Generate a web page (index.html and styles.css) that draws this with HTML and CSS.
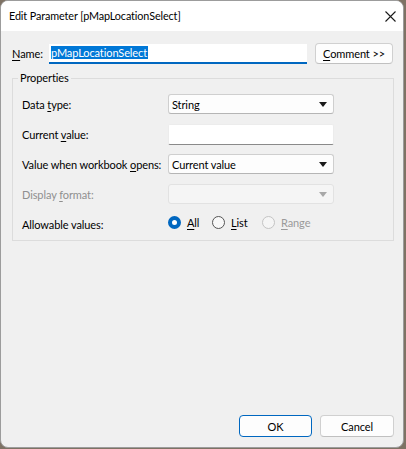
FILE: index.html
```html
<!DOCTYPE html>
<html>
<head>
<meta charset="utf-8">
<link rel="stylesheet" href="styles.css">
</head>
<body>
<div class="window">
  <div class="titlebar">
    <span class="title">Edit Parameter [pMapLocationSelect]</span>
    <svg class="close" width="11" height="11" viewBox="0 0 11 11"><path d="M0.5 0.5L10.5 10.5M10.5 0.5L0.5 10.5" stroke="#1a1a1a" stroke-width="1.1" fill="none"/></svg>
  </div>
  <div class="content">
    <div class="name-row">
      <span class="name-label"><u>N</u>ame:</span>
      <div class="name-input"><span class="sel">pMapLocationSelect</span></div>
      <button class="btn comment"><u>C</u>omment &gt;&gt;</button>
    </div>
    <fieldset class="group">
      <legend>Properties</legend>
      <div class="rows">
        <span class="lbl">Data <u>t</u>ype:</span>
        <div class="combo"><span>String</span><svg class="arrow" width="8" height="5" viewBox="0 0 8 5"><path d="M0 0H8L4 5Z" fill="#1a1a1a"/></svg></div>

        <span class="lbl">Current <u>v</u>alue:</span>
        <div class="textbox"></div>

        <span class="lbl">Value when workbook <u>o</u>pens:</span>
        <div class="combo"><span>Current value</span><svg class="arrow" width="8" height="5" viewBox="0 0 8 5"><path d="M0 0H8L4 5Z" fill="#1a1a1a"/></svg></div>

        <span class="lbl disabled">Display <u>f</u>ormat:</span>
        <div class="combo combo-disabled"><span></span><svg class="arrow" width="8" height="5" viewBox="0 0 8 5"><path d="M0 0H8L4 5Z" fill="#a8a8a8"/></svg></div>

        <span class="lbl">Allowable values:</span>
        <div class="radios">
          <span class="radio r-all"><span class="dot checked"></span><span><u>A</u>ll</span></span>
          <span class="radio r-list"><span class="dot"></span><span><u>L</u>ist</span></span>
          <span class="radio disabled"><span class="dot dot-disabled"></span><span><u>R</u>ange</span></span>
        </div>
      </div>
    </fieldset>
    <div class="footer">
      <button class="btn ok">OK</button>
      <button class="btn cancel">Cancel</button>
    </div>
  </div>
</div>
</body>
</html>
```
FILE: styles.css
```css
html, body {
  margin: 0;
  padding: 0;
}
body {
  width: 406px;
  height: 449px;
  background: #7e7264;
  font-family: Lato, "Liberation Sans", sans-serif;
  font-size: 11px;
  letter-spacing: -0.1px;
  color: #000;
  overflow: hidden;
}
u {
  text-decoration: underline;
  text-underline-offset: 2px;
}
.window {
  box-sizing: border-box;
  width: 404px;
  height: 448px;
  border: 1px solid #9c9c9c;
  border-radius: 8px;
  background: #f0f0f0;
  overflow: hidden;
  display: flex;
  flex-direction: column;
}
.titlebar {
  height: 30px;
  background: #ffffff;
  display: flex;
  align-items: center;
  padding-left: 8px;
  padding-right: 7px;
  flex-shrink: 0;
}
.title {
  font-size: 10.8px;
  color: #000;
  padding-bottom: 1px;
}
.close {
  margin-left: auto;
}
.content {
  flex: 1;
  display: flex;
  flex-direction: column;
  padding: 12px 9px 10px 11px;
}
.name-row {
  display: flex;
  align-items: center;
  height: 21px;
}
.name-label {
  width: 37px;
  white-space: nowrap;
}
.name-input {
  box-sizing: border-box;
  width: 258px;
  height: 20px;
  background: #ffffff;
  border-bottom: 2px solid #0067c0;
  padding: 2px 0 0 2px;
  display: flex;
  align-items: flex-start;
}
.sel {
  background: #0078d7;
  color: #ffffff;
  line-height: 13px;
  height: 13px;
  padding-right: 1px;
}
.btn {
  box-sizing: border-box;
  font-family: inherit;
  font-size: 11px;
  letter-spacing: -0.1px;
  color: #000;
  background: #fdfdfd;
  border: 1px solid #d0d0d0;
  border-bottom-color: #c0c0c0;
  border-radius: 4px;
  padding: 0;
  height: 21px;
}
.comment {
  margin-left: 8px;
  width: 78px;
}
.group {
  box-sizing: border-box;
  margin: 6px 0 0 0;
  width: 382px;
  border: 1px solid #dcdcdc;
  padding: 0 0 6px 9px;
}
.group legend {
  padding: 0 2px;
  margin-left: -4px;
  line-height: 16px;
}
.rows {
  margin-top: 8px;
  display: grid;
  grid-template-columns: 146px 166px;
  grid-auto-rows: 20px;
  row-gap: 10px;
  align-items: center;
}
.lbl {
  white-space: nowrap;
}
.lbl.disabled {
  color: #8f8f8f;
}
.combo {
  box-sizing: border-box;
  height: 20px;
  background: #fdfdfd;
  border: 1px solid #cfcfcf;
  border-bottom-color: #b5b5b5;
  border-radius: 3px;
  display: flex;
  align-items: center;
  padding: 0 6px 0 3px;
}
.combo span {
  flex: 1;
}
.combo-disabled {
  background: #f5f5f5;
  border-color: #e2e2e2;
}
.textbox {
  box-sizing: border-box;
  height: 21px;
  background: #ffffff;
  border: 1px solid #ececec;
  border-bottom-color: #8a8a8a;
  border-radius: 2px;
}
.radios {
  display: flex;
  align-items: center;
  margin-top: -3px;
}
.radio {
  display: flex;
  align-items: center;
  gap: 6px;
}
.r-all {
  width: 44px;
}
.r-list {
  width: 50px;
}
.radio.disabled {
  color: #9a9a9a;
}
.dot {
  box-sizing: border-box;
  width: 13px;
  height: 13px;
  border-radius: 50%;
  border: 1px solid #555555;
  background: #f8f8f8;
}
.dot.checked {
  border: 4px solid #0067c0;
  background: #ffffff;
}
.dot-disabled {
  border-color: #c4c4c4;
  background: #f5f5f5;
}
.footer {
  margin-top: auto;
  display: flex;
  justify-content: flex-end;
  gap: 8px;
}
.ok {
  width: 73px;
  height: 22px;
  border: 1px solid #0067c0;
}
.cancel {
  width: 74px;
  height: 22px;
}
```
